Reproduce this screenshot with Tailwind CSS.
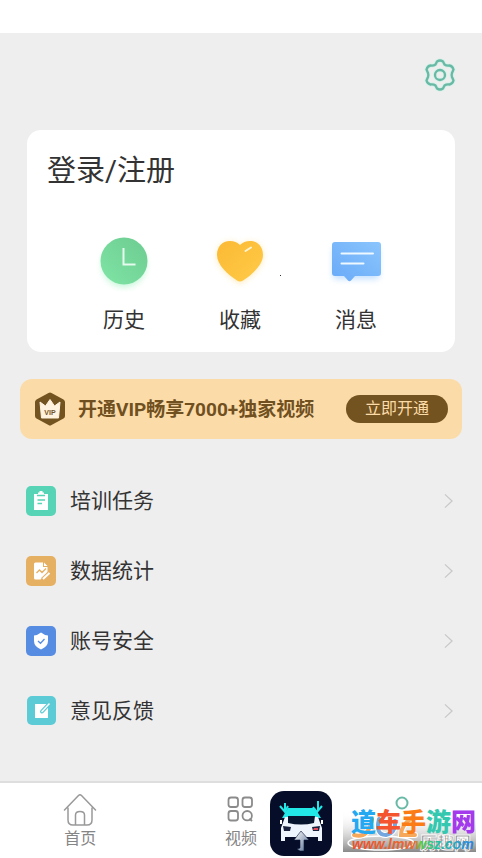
<!DOCTYPE html>
<html lang="zh-CN">
<head>
<meta charset="utf-8">
<meta name="viewport" content="width=device-width, initial-scale=1">
<title>我的</title>
<script src="https://cdn.jsdelivr.net/npm/@tailwindcss/browser@4"></script>
</head>
<body class="min-h-screen flex flex-col bg-[#eeeeee] text-[#333333] [font-family:Roboto,'Noto_Sans_CJK_SC',sans-serif]">
<div class="h-[33px] shrink-0 bg-white"></div>
<main class="grow">
  <header class="flex justify-end px-6 pt-6">
    <button aria-label="设置" class="size-9">
      <svg viewBox="0 0 36 36" class="size-9" fill="none" stroke-linejoin="round">
        <g stroke="#d3f1e8" stroke-width="4"><path d="M15 4.500Q18 2.500 21 4.500L22.500 7.500Q24.500 9 27.500 8.500Q30.500 9 31.500 12.500L30 16Q29.300 18 30 20L31.500 23.500Q30.500 27 27.500 27.500Q24.500 27 22.500 28.500L21 31.500Q18 33.500 15 31.500L13.500 28.500Q11.500 27 8.500 27.500Q5.500 27 4.500 23.500L6 20Q6.700 18 6 16L4.500 12.500Q5.500 9 8.500 8.500Q11.500 9 13.500 7.500Z"/><circle cx="18" cy="18" r="5"/></g>
        <g stroke="#68b9a5" stroke-width="2.300"><path d="M15 4.500Q18 2.500 21 4.500L22.500 7.500Q24.500 9 27.500 8.500Q30.500 9 31.500 12.500L30 16Q29.300 18 30 20L31.500 23.500Q30.500 27 27.500 27.500Q24.500 27 22.500 28.500L21 31.500Q18 33.500 15 31.500L13.500 28.500Q11.500 27 8.500 27.500Q5.500 27 4.500 23.500L6 20Q6.700 18 6 16L4.500 12.500Q5.500 9 8.500 8.500Q11.500 9 13.500 7.500Z"/><circle cx="18" cy="18" r="5"/></g>
      </svg>
    </button>
  </header>

  <section class="relative mx-[27px] mt-[37px] rounded-[14px] bg-white pt-5 pb-4">
    <h1 class="px-5"><a href="#login" class="block text-[29px] leading-[42px]">登录/注册</a></h1>
    <div class="mt-10 grid grid-cols-3 pr-[41px] pl-[39px] text-[21px] leading-8">
      <a href="#history" class="flex flex-col items-center gap-3">
        <svg viewBox="0 0 64 60" class="w-16 h-[60px]">
          <defs><linearGradient id="g1" x1="1" y1="0" x2="0" y2="1"><stop stop-color="#6dcb91"/><stop offset="1" stop-color="#7fe5a5"/></linearGradient><filter id="soft" x="-30%" y="-30%" width="160%" height="160%"><feGaussianBlur stdDeviation="3"/></filter></defs>
          <circle cx="32" cy="33" r="22" fill="#a9f3c5" opacity=".7" filter="url(#soft)"/>
          <circle cx="32" cy="29" r="23.500" fill="url(#g1)"/>
          <path d="M31.500 16V32.500H43.500" fill="none" stroke="#e4fbed" stroke-width="2"/>
        </svg>历史</a>
      <a href="#favorites" class="flex flex-col items-center gap-3">
        <svg viewBox="0 0 64 60" class="w-16 h-[60px]">
          <defs><linearGradient id="g2" x1="0" y1="0" x2="1" y2="1"><stop stop-color="#fbb934"/><stop offset="1" stop-color="#ffcb48"/></linearGradient></defs>
          <path d="M32 52Q9 36 9 24Q10 10 23 10Q29 10 32 15Q36 10 42 10Q54 10 55 24Q55 36 32 52Z" fill="#ffe3a0" opacity=".7" filter="url(#soft)"/>
          <path d="M29 48.500C20 42.500 9 33 9 23C9 15 14 9 22 9Q28 9 32 13Q36 9 42 9C50 9 55 15 55 23C55 33 44 42.500 35 48.500Q32 50.500 29 48.500Z" fill="url(#g2)"/>
          <path d="M37.500 19L43 15.500" stroke="#fff4cf" stroke-width="2" stroke-linecap="round"/>
        </svg>收藏</a>
      <a href="#messages" class="flex flex-col items-center gap-3">
        <svg viewBox="0 0 64 60" class="w-16 h-[60px]">
          <defs><linearGradient id="g3" x1="1" y1="0" x2="0" y2="1"><stop stop-color="#8bc5fd"/><stop offset="1" stop-color="#69aaf8"/></linearGradient></defs>
          <rect x="9" y="16" width="46" height="31" rx="3" fill="#a9d2ff" opacity=".7" filter="url(#soft)"/>
          <path d="M11 10H54Q57 10 57 13V41Q57 44 54 44H31L27 48.500Q25.500 50 24 48.500L20 44H11Q8 44 8 41V13Q8 10 11 10Z" fill="url(#g3)"/>
          <path d="M17.500 21.500H49M17.500 31.500H39.500" stroke="#eef8ff" stroke-width="2" stroke-linecap="round"/>
        </svg>消息</a>
    </div>
    <span class="absolute left-[253px] top-[145px] size-px bg-[#333]"></span>
  </section>

  <section class="mx-5 mt-[27px] flex items-center rounded-[12px] bg-[#fbdba8] px-[14px] py-[13px] text-[#70501f]">
    <svg viewBox="0 0 32 34" class="w-8 h-[34px] shrink-0">
      <path d="M14.500 1Q16 0 17.500 1L29.500 7.500Q31 8.500 31 10V24Q31 25.500 29.500 26.500L17.500 33Q16 34 14.500 33L2.500 26.500Q1 25.500 1 24V10Q1 8.500 2.500 7.500Z" fill="#73531f"/>
      <path d="M6 10L11.500 14L16 7.500L20.500 14L26 10L24.500 26H7.500Z" fill="#fff3df" stroke="#fff3df" stroke-linejoin="round"/>
      <text x="16" y="23" text-anchor="middle" font-family="Liberation Sans, sans-serif" font-size="7" font-weight="700" fill="#73531f">VIP</text>
    </svg>
    <p class="ml-3 grow whitespace-nowrap pt-0.5 text-[19px] leading-8 font-bold">开通VIP畅享7000+独家视频</p>
    <button class="h-7 rounded-full bg-[#73531f] px-[19px] text-base leading-7 whitespace-nowrap text-[#fbdba8]">立即开通</button>
  </section>

  <nav class="mt-[27px] pr-[29px] pl-[26px] text-[21px]">
    <a href="#training" class="flex h-[70px] items-center gap-[14px]">
      <svg viewBox="0 0 30 30" class="size-[30px]"><rect width="30" height="30" rx="5" fill="#57d3b5"/><path d="M8 8H12V6.500H13.500V5H16.500V6.500H18V8H22V24H8Z" fill="#fff"/><path d="M11 9.500H19M11.500 14H19M11.500 17.500H16" stroke="#57d3b5" stroke-width="1.300"/></svg>
      <span class="grow pt-0.5">培训任务</span>
      <svg viewBox="0 0 10 18" class="w-[9px] h-4" fill="none" stroke="#c8c8c8" stroke-width="1.400"><path d="M1 1.500L9 9L1 16.500"/></svg>
    </a>
    <a href="#stats" class="flex h-[70px] items-center gap-[14px]">
      <svg viewBox="0 0 30 30" class="size-[30px]"><rect width="30" height="30" rx="5" fill="#e6b063"/><path d="M8 8Q8 6.500 9.500 6.500H17V11H21.500V16L14.500 23.500H9.500Q8 23.500 8 22Z M18 6.500L21.500 10H18Z" fill="#fff"/><path d="M10.500 17L13.500 14L16 16.500L20 12.500" fill="none" stroke="#e6b063" stroke-width="1.300"/><path d="M16.500 23.500L24 16.500" stroke="#e6b063" stroke-width="4"/><path d="M17 23L23.500 17" stroke="#fff" stroke-width="2"/></svg>
      <span class="grow pt-0.5">数据统计</span>
      <svg viewBox="0 0 10 18" class="w-[9px] h-4" fill="none" stroke="#c8c8c8" stroke-width="1.400"><path d="M1 1.500L9 9L1 16.500"/></svg>
    </a>
    <a href="#security" class="flex h-[70px] items-center gap-[14px]">
      <svg viewBox="0 0 30 30" class="size-[30px]"><rect width="30" height="30" rx="5" fill="#568de2"/><path d="M15 6.500Q18 9 22 9.500V15Q22 20.500 15 23.500Q8 20.500 8 15V9.500Q12 9 15 6.500Z" fill="#fff"/><path d="M12 15L14.500 17.300L18.500 13" fill="none" stroke="#568de2" stroke-width="1.300"/></svg>
      <span class="grow pt-0.5">账号安全</span>
      <svg viewBox="0 0 10 18" class="w-[9px] h-4" fill="none" stroke="#c8c8c8" stroke-width="1.400"><path d="M1 1.500L9 9L1 16.500"/></svg>
    </a>
    <a href="#feedback" class="flex h-[70px] items-center gap-[14px]">
      <svg viewBox="0 0 30 30" class="size-[30px]"><rect x="1" width="29" height="29" rx="5" fill="#5ccbd5"/><path d="M9 8H22V22H9Z" fill="#fff"/><path d="M16 15.500L23 8" stroke="#5ccbd5" stroke-width="4" stroke-linecap="round"/><path d="M16 15.500L23 8" stroke="#fff" stroke-width="1.500" stroke-linecap="round"/></svg>
      <span class="grow pt-0.5">意见反馈</span>
      <svg viewBox="0 0 10 18" class="w-[9px] h-4" fill="none" stroke="#c8c8c8" stroke-width="1.400"><path d="M1 1.500L9 9L1 16.500"/></svg>
    </a>
  </nav>
</main>

<footer class="relative shrink-0 border-t-2 border-[#dedede] bg-white">
  <nav class="grid grid-cols-3 pt-[10px] pb-[7px] text-base leading-6 text-[#858585]">
    <a href="#home" class="flex flex-col items-center">
      <svg viewBox="0 0 34 34" class="size-[34px]" fill="none" stroke="#999" stroke-width="1.500" stroke-linecap="round" stroke-linejoin="round"><path d="M1.500 17L15.500 2.500Q17 1 18.500 2.500L32.500 17M5 15V27Q5 32 10 32H24Q29 32 29 27V15M12.500 32V22Q12.500 18.500 17 18.500Q21.500 18.500 21.500 22V32"/></svg>首页</a>
    <a href="#video" class="flex flex-col items-center">
      <svg viewBox="0 0 34 34" class="size-[34px]" fill="none" stroke="#8b8b8b" stroke-width="1.800"><rect x="4.500" y="4.500" width="9.500" height="9.500" rx="2.500"/><rect x="18.500" y="4.500" width="9.500" height="9.500" rx="2.500"/><rect x="4.500" y="18" width="9.500" height="9.500" rx="2.500"/><circle cx="23.200" cy="22.700" r="4.700"/><path d="M25.500 25.500L28 28"/></svg>视频</a>
    <a href="#mine" aria-label="我的" class="flex flex-col items-center">
      <svg viewBox="0 0 34 34" class="size-[34px]" fill="none" stroke="#68b9a5" stroke-width="2"><circle cx="17" cy="10" r="5.500"/></svg></a>
  </nav>
  <svg viewBox="0 0 62 65" class="absolute left-[270px] top-2 w-[62px] h-[65px]" role="img" aria-label="车">
    <defs><linearGradient id="g4" x1="0" y1="0" x2="1" y2="1"><stop stop-color="#fff"/><stop offset="1" stop-color="#536c91"/></linearGradient></defs>
    <rect width="62" height="65" rx="14" fill="#050d28"/>
    <path d="M18 17H45L51 27H12Z" fill="#22e8e7"/>
    <path d="M15 26H48L52 37V50H48V46H15V50H11V37Z" fill="#eef5fc"/>
    <path d="M18 25H45L44 32Q31 35 18 32Z" fill="#07152e"/>
    <path d="M13 35L21 36L20 40H14ZM42 36L50 35L49 40H43Z" fill="#19233f"/><path d="M44 37H48V39H43Z" fill="#e34b5b"/>
    <path d="M10 29H12V33H10ZM51 29H53V33H51Z" fill="#fff"/>
    <path d="M15 12V20M10 15L15 21L18 15M48 10V20M43 16L47 21L52 15" fill="none" stroke="#22e8e7" stroke-width="2"/>
    <path d="M31 40L39 49H34V60H30L27 58L30 57V49H24Z" fill="url(#g4)" stroke="#0a1837" stroke-width=".6"/>
  </svg>
  <svg viewBox="0 0 139 55" class="absolute left-[343px] top-5 w-[139px] h-[55px]" font-family="Noto Sans CJK SC, sans-serif">
    <defs>
      <linearGradient id="shade" x1="0" y1="0" x2="0" y2="1"><stop stop-color="#fff" stop-opacity="0"/><stop offset="1" stop-color="#888"/></linearGradient>
      <linearGradient id="rb"><stop stop-color="#f0512e"/><stop offset=".52" stop-color="#e86a32"/><stop offset=".56" stop-color="#5ccc3c"/><stop offset=".68" stop-color="#28c596"/><stop offset="1" stop-color="#2b83e8"/></linearGradient>
      <linearGradient id="pink" x1="0" y1="1" x2="1" y2="0"><stop stop-color="#4d67f2"/><stop offset="1" stop-color="#e429cc"/></linearGradient>
      <linearGradient id="cy"><stop stop-color="#22b7f2"/><stop offset="1" stop-color="#48d970"/></linearGradient>
    </defs>
    <rect y="8" width="133" height="41" fill="url(#shade)"/>
    <ellipse cx="38" cy="40" rx="33" ry="7" fill="none" stroke="#fff" stroke-width="1.500"/>
    <path d="M11 32Q26 36 29 16M36 16Q32 32 43 32Q53 30 52 18M70 14Q58 22 58 32H72" fill="none" stroke="#fff" stroke-width="6" stroke-linecap="round"/>
    <path d="M11 32Q26 36 29 16M70 14Q58 22 58 32H72" fill="none" stroke="#f7a95b" stroke-width="4" stroke-linecap="round"/>
    <path d="M36 16Q32 32 43 32Q53 30 52 18" fill="none" stroke="#73a7e0" stroke-width="4" stroke-linecap="round"/>
    <text x="77" y="46" font-size="17" font-weight="700" fill="#888" stroke="#fff" stroke-width=".8">历趣网</text>
    <text x="8" y="28" font-size="25" font-weight="900"><tspan fill="#23a8f2">道</tspan><tspan fill="#f4542e">车</tspan><tspan fill="#fb7b15">手</tspan><tspan fill="#35c8b0">游</tspan><tspan fill="#a33aeb">网</tspan></text>
    <text x="9" y="46" font-family="Liberation Sans, sans-serif" font-size="14" font-weight="700" font-style="italic" fill="url(#rb)">www.lmwwsz.com</text>
  </svg>
</footer>
</body>
</html>
